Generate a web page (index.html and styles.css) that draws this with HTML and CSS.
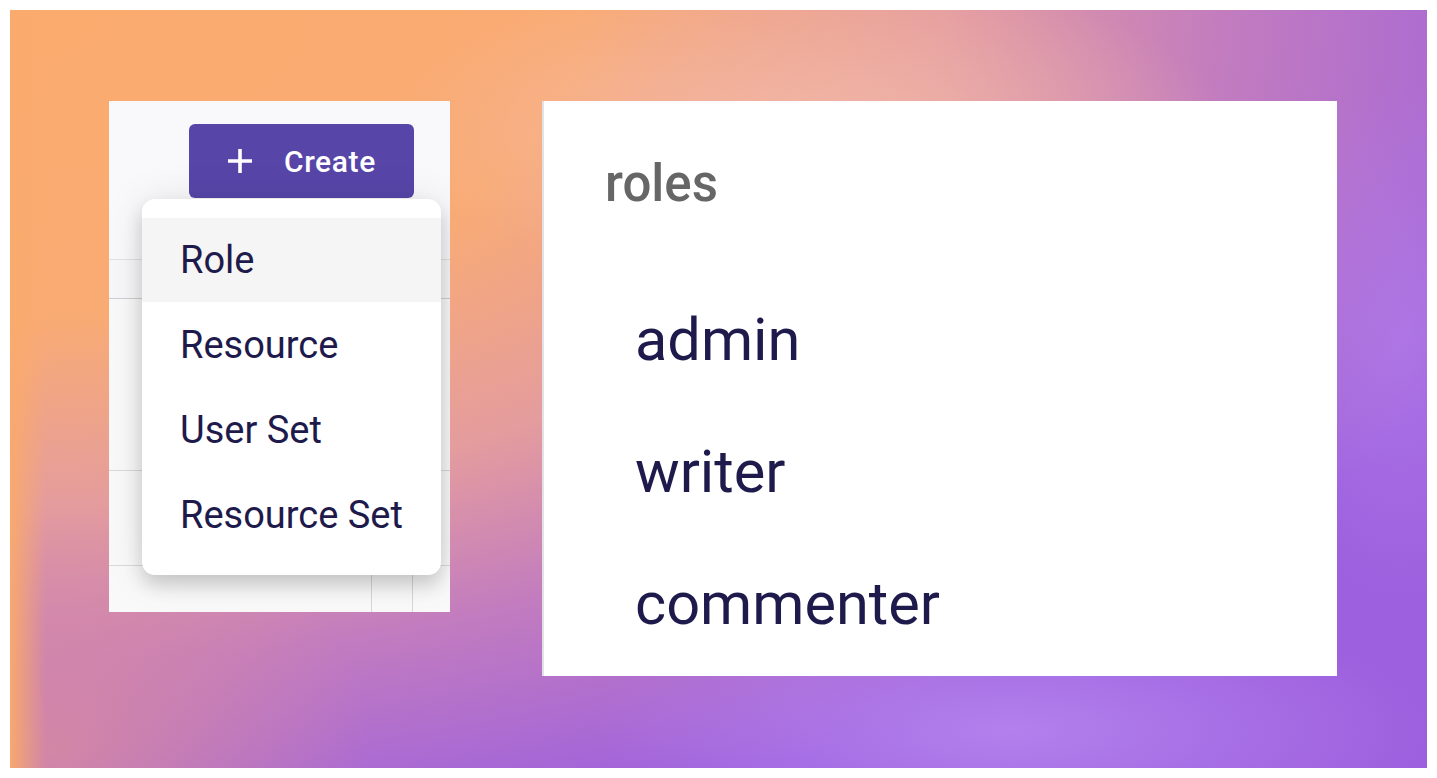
FILE: index.html
```html
<!DOCTYPE html>
<html lang="en">
<head>
<meta charset="utf-8">
<title>Roles</title>
<link rel="stylesheet" href="styles.css">
</head>
<body>
<div class="frame">
  <section class="left-panel">
    <div class="toolbar">
      <button class="create-btn" type="button">
        <svg class="plus" viewBox="0 0 28 28" width="28" height="28" aria-hidden="true">
          <path d="M14 2v24M2 14h24" stroke="#fff" stroke-width="3.6" stroke-linecap="butt" fill="none"/>
        </svg>
        <span>Create</span>
      </button>
    </div>
    <div class="table">
      <div class="trow thead"><div class="cell c1"></div><div class="cell c2"></div><div class="cell c3"></div></div>
      <div class="trow r2"><div class="cell c1"></div><div class="cell c2"></div><div class="cell c3"></div></div>
      <div class="trow r3"><div class="cell c1"></div><div class="cell c2"></div><div class="cell c3"></div></div>
      <div class="trow r4"><div class="cell c1"></div><div class="cell c2"></div><div class="cell c3"></div></div>
    </div>
    <ul class="menu">
      <li class="menu-item active">Role</li>
      <li class="menu-item">Resource</li>
      <li class="menu-item">User Set</li>
      <li class="menu-item">Resource Set</li>
    </ul>
  </section>
  <section class="right-panel">
    <h2 class="roles-title">roles</h2>
    <ul class="roles-list">
      <li>admin</li>
      <li>writer</li>
      <li>commenter</li>
    </ul>
  </section>
</div>
</body>
</html>
```
FILE: styles.css
```css
html, body {
  margin: 0;
  padding: 0;
  background: #ffffff;
}
body {
  font-family: Roboto, "Noto Sans", "Liberation Sans", sans-serif;
}
.frame {
  margin: 10px;
  width: 1417px;
  height: 758px;
  box-sizing: border-box;
  padding: 91px 0 0 99px;
  display: flex;
  align-items: flex-start;
  gap: 92px;
  background:
    linear-gradient(to right, rgba(250,170,108,0.95) 0px, rgba(250,170,108,0) 36px),
    radial-gradient(ellipse 420px 160px at 800px 120px, rgba(243,186,170,0.85), rgba(243,186,170,0)),
    radial-gradient(ellipse 420px 130px at 1000px 720px, rgba(184,136,240,0.8), rgba(184,136,240,0)),
    radial-gradient(ellipse 140px 260px at 1390px 330px, rgba(180,128,236,0.6), rgba(180,128,236,0)),
    radial-gradient(ellipse 320px 260px at 40px 740px, rgba(222,142,152,0.75), rgba(222,142,152,0)),
    radial-gradient(ellipse 1600px 860px at 0px 0px, #fbab6d 0%, #f9ab74 36%, #e49c9e 58%, #c27cbf 76%, #9d60de 100%);
}
.left-panel {
  position: relative;
  width: 341px;
  height: 511px;
  background: #f9f9fb;
  overflow: hidden;
  flex: none;
}
.toolbar {
  height: 158px;
  display: flex;
  align-items: flex-start;
  padding: 23px 0 0 80px;
  box-sizing: border-box;
}
.create-btn {
  width: 225px;
  height: 74px;
  border: none;
  border-radius: 6px;
  background: #5746a8;
  color: #ffffff;
  display: flex;
  align-items: center;
  padding: 0 0 0 37px;
  gap: 30px;
  font-family: Roboto, "Noto Sans", sans-serif;
  font-weight: 500;
  font-size: 30px;
  letter-spacing: 0.6px;
}
.plus { flex: none; }
.table {
  background: #f9f9f9;
}
.trow {
  display: flex;
  border-top: 1px solid #d9d9dc;
}
.thead { height: 38px; background: #f7f7f9; border-top-color: #e2e2e4; }
.r2 { height: 171px; border-top-color: #cfcfd2; }
.r3 { height: 94px; }
.r4 { height: 60px; }
.cell { height: 100%; }
.c1 { width: 262px; }
.c2 { width: 40px; border-left: 1px solid #d6d6d8; }
.c3 { flex: 1; border-left: 1px solid #d6d6d8; }
.menu {
  position: absolute;
  left: 33px;
  top: 98px;
  width: 299px;
  margin: 0;
  padding: 19px 0 17px;
  list-style: none;
  background: #ffffff;
  border-radius: 13px;
  box-shadow: 0 10px 18px rgba(0,0,0,0.16), 0 2px 40px rgba(0,0,0,0.10);
}
.menu-item {
  height: 85px;
  line-height: 85px;
  padding-left: 38px;
  font-size: 38px;
  color: #1e1a4b;
}
.menu-item.active {
  background: #f5f5f5;
  height: 84px;
  line-height: 84px;
  margin-bottom: 1px;
}
.right-panel {
  width: 795px;
  height: 575px;
  background: #ffffff;
  border-left: 2px solid #e2e2e6;
  box-sizing: border-box;
  padding: 53px 0 0 61px;
  flex: none;
}
.roles-title {
  margin: 0;
  font-size: 51px;
  line-height: 60px;
  font-weight: 500;
  color: #666666;
}
.roles-list {
  list-style: none;
  margin: 60px 0 0 30px;
  padding: 0;
}
.roles-list li {
  font-size: 59.5px;
  line-height: 132px;
  color: #1e1a4b;
}
```
